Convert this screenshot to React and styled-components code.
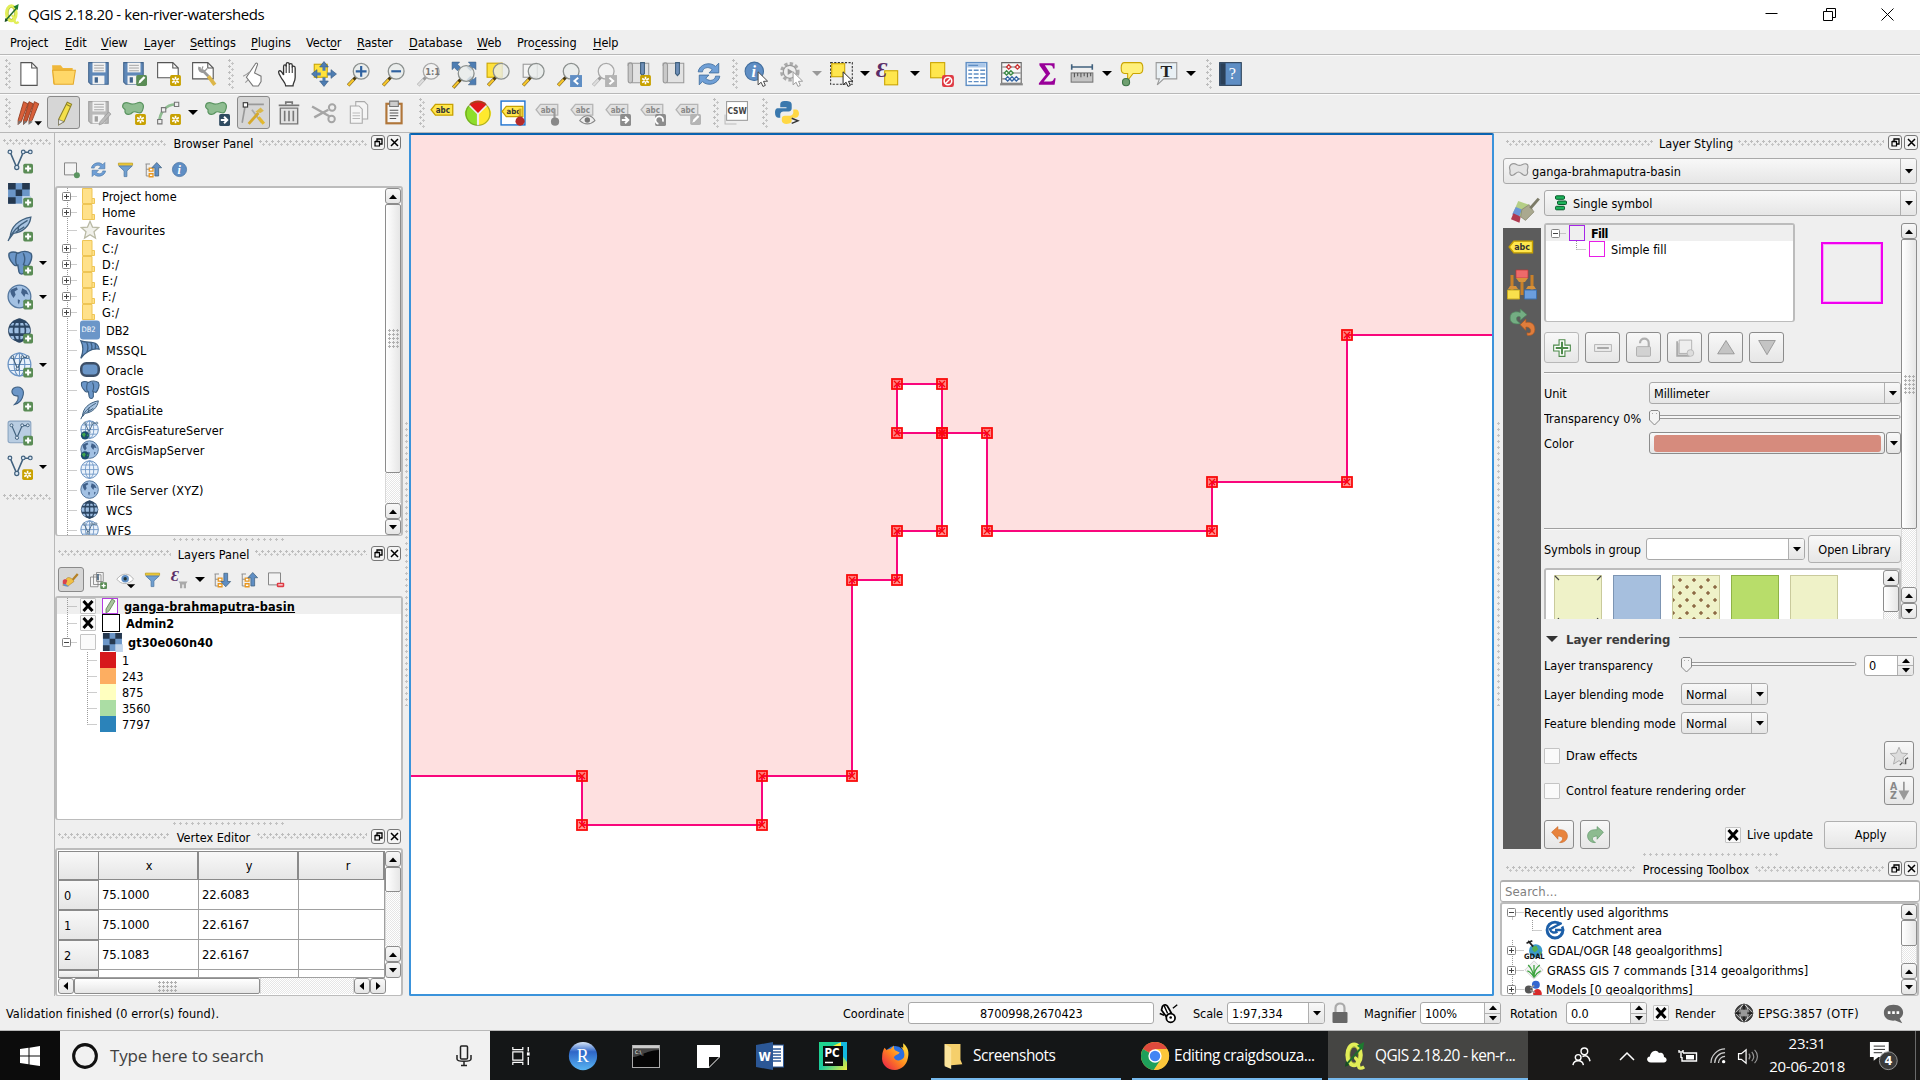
import React from 'react';
import styled, { createGlobalStyle, css } from 'styled-components';

const Global = createGlobalStyle`
  * { box-sizing: border-box; }
  html, body { margin: 0; padding: 0; overflow: hidden; }
  body {
    font-family: "DejaVu Sans Condensed", "Noto Sans", sans-serif;
    font-size: 12.6px; letter-spacing: 0; color: #000; background: #efefef;
  }
  svg { display: block; flex: none; overflow: visible; }
`;

/* ---------- shell ---------- */
const Window = styled.div`width: 1920px; height: 1080px; display: flex; flex-direction: column; background: #efefef; overflow: hidden; white-space: nowrap;`;
const TitleBar = styled.div`
  height: 30px; flex: none; background: #fff; display: flex; align-items: center; padding: 0 26px 2px 4px;
  font: 15px "Open Sans", sans-serif; letter-spacing: -0.4px;
`;
const TitleText = styled.span`flex: 1; margin-left: 8px;`;
const WinControls = styled.div`display: flex; gap: 45px; align-items: center;`;
const MenuBar = styled.div`height: 25px; flex: none; display: flex; align-items: center; padding-left: 10px; gap: 15px; border-bottom: 1px solid #b8b8b8; letter-spacing: -0.1px;`;
const MenuItem = styled.span`width: ${p => p.$w}px; u { text-underline-offset: 2px; }`;
const ToolBar = styled.div`
  height: ${p => p.$h || 39}px; flex: none; display: flex; align-items: center; padding: 0 0 2px 2px;
  border-top: 1px solid #fbfbfb; border-bottom: 1px solid #b8b8b8;
`;
const Slot = styled.div`width: ${p => p.$w || 35}px; height: 33px; flex: none; display: flex; align-items: center; justify-content: center;`;
const Pressed = styled.div`
  width: ${p => p.$w || 33}px; height: ${p => p.$h || 33}px; border: 1px solid #8a8a8a; border-radius: 3px; background: #d6d6d6;
  display: flex; align-items: center; justify-content: center;
`;
const dots = css`
  background-image: radial-gradient(circle at 1.5px 1.5px, #bdbdbd 1px, transparent 1.4px), radial-gradient(circle at 4.5px 4.5px, #c6c6c6 1px, transparent 1.4px);
  background-size: 6px 6px;
`;
const BarGrip = styled.div`width: 6px; height: 30px; flex: none; margin-left: ${p => p.$l || 0}px; margin-right: ${p => p.$r || 0}px; ${dots}`;
const Caret = styled.i`
  display: block; flex: none; width: 0; height: 0; border: ${p => p.$s || 5}px solid transparent; border-bottom-width: 0; border-top: ${p => p.$s || 5}px solid ${p => p.$c || '#000'};
`;
const CaretSlot = styled.div`width: ${p => p.$w}px; flex: none; display: flex; justify-content: center;`;

const Main = styled.div`height: 863px; flex: none; display: flex;`;
const SideBar = styled.div`width: 55px; border-right: 1px solid #b8b8b8; display: flex; flex-direction: column; align-items: flex-start; padding-top: 6px;`;
const SideGrip = styled.div`width: 48px; height: 6px; margin-left: 3px; ${dots}`;
const SideList = styled.div`margin-top: -1px;`;
const SideItem = styled.div`height: 34px; padding-left: 7px; display: flex; align-items: center; gap: 6px;`;
const LeftDock = styled.div`width: 348px; display: flex; flex-direction: column;`;
const VSplit = styled.div`width: ${p => p.$w}px; display: flex; justify-content: center; align-items: center;`;
const VDots = styled.div`width: 3px; height: 284px; margin-top: -2px; background: radial-gradient(circle at 1.5px 1.5px, #c2c2c2 1px, transparent 1.4px); background-size: 3px 6px;`;
const HSplit = styled.div`height: ${p => p.$h}px; flex: none; display: flex; justify-content: center; align-items: center;`;
const HDots = styled.div`width: ${p => p.$w}px; height: 3px; margin-top: -1px; background: radial-gradient(circle at 1.5px 1.5px, #c2c2c2 1px, transparent 1.4px); background-size: 6px 3px;`;

/* ---------- dock pieces ---------- */
const DockHead = styled.div`height: ${p => p.$h || 22}px; flex: none; display: flex; align-items: center; padding: 0 2px 0 3px;`;
const DockGrip = styled.div`flex: 1; height: 6px; margin-top: -3px; ${dots}`;
const DockName = styled.span`margin: -1px 7px 0 9px; flex: none; width: ${p => p.$w}px; text-align: center; display: flex; justify-content: center;`;
const DockBtn = styled.div`
  width: 14px; height: 15px; margin-left: ${p => p.$l}px; margin-top: -3px; border: 1px solid #777; border-radius: 3px; background: #f4f4f4;
  display: flex; align-items: center; justify-content: center;
`;
const PanelTools = styled.div`height: 31px; flex: none; display: flex; align-items: center; padding: 0 0 2px ${p => p.$l || 3}px;`;
const Frame = styled.div`
  height: ${p => p.$h}px; width: ${p => p.$w ? p.$w + 'px' : 'auto'}; flex: none; background: #fff; border: 2px solid #bcbcbc; border-bottom-width: 1px; border-radius: 3px; display: flex; overflow: hidden;
`;
const Tree = styled.div`flex: 1; min-width: 0; overflow: hidden; padding-top: ${p => p.$t || 0}px;`;
const Row = styled.div`
  height: ${p => p.$h}px; display: flex; align-items: center; background: ${p => p.$sel ? '#efefef' : 'transparent'};
  padding-left: ${p => p.$l || 0}px;
`;
const RowIcon = styled.div`margin: 0 ${p => p.$r}px 0 ${p => p.$l}px; flex: none;`;
const RowText = styled.span`
  font-weight: ${p => p.$b ? 700 : 400}; text-decoration: ${p => p.$u ? 'underline' : 'none'};
  letter-spacing: ${p => p.$ls !== undefined ? p.$ls + 'px' : '0.02px'}; line-height: 16px; margin-top: 1.6px;
`;
const Swatch = styled.div`width: 16px; height: 16px; flex: none; background: ${p => p.$c}; ${p => p.$bd && css`border: 1px solid ${p.$bd};`}`;
const CheckBox = styled.div`
  width: 16px; height: 16px; flex: none; background: #fafafa; border: 1px solid #c4c4c4; border-radius: 1px;
  display: flex; align-items: center; justify-content: center;
`;

/* ---------- controls ---------- */
const raised = css`background: linear-gradient(#f8f8f8, #e6e6e6);`;
const Scroll = styled.div`width: 16px; flex: none; display: flex; flex-direction: column; height: ${p => p.$h ? p.$h + 'px' : 'auto'};`;
const HScroll = styled.div`height: 16px; width: 328px; flex: none; display: flex;`;
const ScrollBtn = styled.div`
  width: 16px; height: 16px; flex: none; border: 1px solid #8c8c8c; border-radius: 3px; ${raised}
  display: flex; align-items: center; justify-content: center;
`;
const Thumb = styled.div`
  ${p => p.$x ? css`width: ${p.$x}px; height: 16px;` : css`height: ${p.$y}px; width: 16px;`}
  flex: none; border: 1px solid #8c8c8c; border-radius: 2px; background: linear-gradient(${p => p.$x ? '180deg' : '90deg'}, #fff, #e6e6e6);
  display: flex; align-items: center; justify-content: center;
`;
const ThumbDots = styled.div`width: ${p => p.$w}px; height: ${p => p.$h}px; background: radial-gradient(circle at 1.5px 1.5px, #b0b0b0 1px, transparent 1.4px); background-size: 4px 4px;`;
const Track = styled.div`flex: 1; background: conic-gradient(#fff 25%, #e6e6e6 0 50%, #fff 0 75%, #e6e6e6 0); background-size: 2px 2px; border: 0 solid #d8d8d8; border-width: 0 1px;`;
const Combo = styled.div`
  width: ${p => p.$w}px; height: ${p => p.$h}px; margin-left: ${p => p.$l || 0}px; flex: none; border: 1px solid #a9a9a9; border-radius: 3px;
  ${p => p.$edit ? 'background: #fff;' : raised} display: flex; align-items: center; padding-left: ${p => p.$p || 4}px; overflow: hidden;
`;
const ComboText = styled.span`flex: 1; padding-left: ${p => p.$l || 0}px; letter-spacing: ${p => p.$ls !== undefined ? p.$ls + 'px' : '-0.1px'};`;
const ComboDrop = styled.div`width: 16px; align-self: stretch; border-left: 1px solid #b0b0b0; ${raised} display: flex; align-items: center; justify-content: center;`;
const SpinCol = styled.div`width: 16px; align-self: stretch; border-left: 1px solid #b0b0b0; ${raised} display: flex; flex-direction: column; > :first-child { border-bottom: 1px solid #b0b0b0; }`;
const SpinHalf = styled.div`flex: 1; display: flex; align-items: center; justify-content: center;`;
const Btn = styled.div`
  width: ${p => p.$w}px; height: ${p => p.$h}px; flex: none; border: 1px solid ${p => p.$c || '#8c8c8c'}; border-radius: 3px; ${raised}
  display: flex; align-items: center; justify-content: center; letter-spacing: -0.1px;
`;

/* ---------- vertex table ---------- */
const TableWrap = styled.div`flex: 1; display: flex; flex-direction: column; padding: 1px 0 0 1px;`;
const TableTop = styled.div`height: 127px; display: flex; flex: none;`;
const Grid = styled.div`flex: 1; display: grid; grid-template-columns: 41px 100px 100px 86px; grid-template-rows: 29px 30px 30px 30px 8px; overflow: hidden;`;
const HeadCell = styled.div`
  ${raised} border: 1px solid #8a8a8a; border-width: 1px 2px 1px 0; display: flex; align-items: center;
  justify-content: ${p => p.$row ? 'flex-start' : 'center'}; padding-left: ${p => p.$row ? 5 : p.$l || 2}px;
  ${p => p.$row && css`border-width: 1px 1px 1px 1px;`}
`;
const Cell = styled.div`border: 1px solid #a0a0a0; border-width: 0 1px 1px 0; display: flex; align-items: center; padding: 0 0 1px 3px; font-size: 13px; letter-spacing: -0.15px;`;

/* ---------- canvas ---------- */
const Canvas = styled.div`width: 1085px; height: 863px; flex: none; border: 2px solid #3b93db; border-top-color: #0a63b0; border-radius: 2px; background: #fff; overflow: hidden;`;

/* ---------- right dock ---------- */
const RightDock = styled.div`width: 417px; display: flex; flex-direction: column;`;
const StyleBody = styled.div`display: flex; margin-top: 6px; height: 659px; flex: none;`;
const StyleTabs = styled.div`width: 38px; flex: none; display: flex; flex-direction: column;`;
const TabActive = styled.div`height: 38px; display: flex; align-items: center; justify-content: flex-end; padding-right: 1px;`;
const TabStack = styled.div`flex: 1; background: #5c5c5c; display: flex; flex-direction: column; align-items: center; padding-top: 5px; gap: 5px;`;
const StyleMain = styled.div`flex: 1; padding: 0 3px 0 3px; display: flex; flex-direction: column;`;
const ScrollArea = styled.div`height: 396px; margin-top: 7px; display: flex; flex: none;`;
const ScrollContent = styled.div`width: 357px; display: flex; flex-direction: column; overflow: hidden;`;
const SymbolTop = styled.div`display: flex; height: 99px; flex: none;`;
const Preview = styled.div`width: 62px; height: 62px; margin: 19px 0 0 26px; border: 2px solid #f000f0; box-shadow: inset 0 0 0 1px #f9a8f7;`;
const BtnRow = styled.div`display: flex; gap: 6px; margin-top: 10px; height: 31px; flex: none;`;
const Rule = styled.div`height: 2px; flex: none; border-top: 1px solid #a0a0a0; border-bottom: 1px solid #fafafa; margin-top: ${p => p.$t || 0}px;`;
const Field = styled.div`display: flex; align-items: center; height: ${p => p.$h}px; margin-top: ${p => p.$t || 0}px; flex: none;`;
const FieldLabel = styled.span`width: ${p => p.$w}px; flex: none; letter-spacing: ${p => p.$ls !== undefined ? p.$ls + 'px' : 'inherit'};`;
const ColorFill = styled.div`width: 227px; height: 17px; background: #d68b7d; border-radius: 3px;`;
const SymbolList = styled.div`height: 60px; flex: none; margin-top: 5px; background: #fff; border: 2px solid #bcbcbc; border-bottom: 0; border-radius: 3px 3px 0 0; display: flex; padding-left: 8px;`;
const SymbolItems = styled.div`flex: 1; display: flex; gap: 11px; padding-top: 5px;`;
const SymbolTile = styled.div`
  width: 48px; height: 60px; background: ${p => p.$c}; border: 1px solid ${p => p.$b};
  ${p => p.$dots && css`background-image: radial-gradient(circle at 7px 4px, #8d6a45 1.4px, transparent 2px), radial-gradient(circle at 0px 11px, #8d6a45 1.4px, transparent 2px), radial-gradient(circle at 14px 11px, #8d6a45 1.4px, transparent 2px); background-size: 14px 13px;`}
`;
const GroupHead = styled.div`display: flex; align-items: center; height: 20px; margin-top: 10px; padding-left: 2px; font-weight: 700; color: #3c3c3c; flex: none;`;
const GroupName = styled.span`margin: 0 7px 0 8px; width: 106px; font-size: 13px; letter-spacing: -0.06px;`;
const GroupLine = styled.div`flex: 1; height: 1px; background: #8c8c8c; margin-top: -3px;`;
const Spacer = styled.div`flex: 1;`;
const SearchField = styled.div`height: 22px; margin-left: -3px; flex: none; background: #fff; border: 1px solid #b0b0b0; border-top-width: 2px; border-radius: 3px; color: #808080; padding-left: 4px; display: flex; align-items: center; letter-spacing: 0.12px; font-size: 13px;`;

/* ---------- status bar ---------- */
const StatusBar = styled.div`height: 35px; flex: none; border-bottom: 1px solid #b8b8b8; display: flex; align-items: center; padding: 0 0 0 6px;`;
const StatusText = styled.span`width: ${p => p.$w}px; flex: none; margin-left: ${p => p.$l || 0}px; letter-spacing: ${p => p.$ls !== undefined ? p.$ls + 'px' : '-0.1px'};`;
const Box = styled.div`margin-left: ${p => p.$l}px; flex: none;`;

/* ---------- taskbar ---------- */
const TaskBar = styled.div`height: 50px; flex: none; background: #141617; display: flex; color: #fff; font: 15.4px "Open Sans", sans-serif; letter-spacing: -0.3px;`;
const Start = styled.div`width: 60px; flex: none; background: #0c0c0c; display: flex; align-items: center; justify-content: center;`;
const Search = styled.div`width: 430px; flex: none; background: #f1f1f1; color: #404040; display: flex; align-items: center; padding: 0 17px 0 12px; font-size: 17px; letter-spacing: -0.14px;`;
const SearchText = styled.span`flex: 1; margin: -2px 0 0 12px;`;
const AppIcon = styled.div`width: 62.3px; flex: none; display: flex; align-items: center; justify-content: center;`;
const TaskApp = styled.div`
  width: ${p => p.$w}px; flex: none; margin-left: ${p => p.$l || 0}px; display: flex; align-items: center; padding-left: ${p => p.$p}px;
  background: ${p => p.$on ? '#454543' : 'transparent'}; border-bottom: 3px solid #76b9ed; padding-top: 3px;
`;
const AppText = styled.span`margin: -1px 0 0 ${p => p.$l}px; letter-spacing: ${p => p.$ls}px;`;
const Tray = styled.div`flex: 1; display: flex; align-items: center; background: #1a1918;`;
const TrayIcon = styled.div`width: ${p => p.$w}px; display: flex; justify-content: center; flex: none;`;
const Clock = styled.div`width: 90px; flex: none; text-align: center; line-height: 23px; margin-top: -2px; font-size: 15px; letter-spacing: -0.25px;`;
const Peek = styled.div`width: 5px; height: 50px; flex: none; border-left: 1px solid #6a6a6a;`;

/* ---------- icon primitives ---------- */
const Ic = ({ s = 26, w, h, vb = '0 0 24 24', children }) => (
  <svg width={w || s} height={h || s} viewBox={vb} fill="none">{children}</svg>
);
const Glyph = styled.text`font-family: ${p => p.$f || '"DejaVu Sans Condensed", sans-serif'}; font-weight: ${p => p.$wt || 400}; letter-spacing: 0;`;
const Star = ({ x = 13, y = 13, c = '#c8a100' }) => (
  <g transform={`translate(${x} ${y})`}><rect width="10" height="10" rx="1.5" fill={c} /><path d="M5 1.5v7M1.9 3.2l6.2 3.6M1.9 6.8l6.2-3.6" stroke="#fff" strokeWidth="1.5" /><circle cx="5" cy="5" r="1" fill={c} /></g>
);
const Plus = ({ x = 13.5, y = 13.5 }) => (
  <g transform={`translate(${x} ${y})`}><rect width="9" height="9" rx="1.5" fill="#5a8c55" /><path d="M4.5 1.7v5.6M1.7 4.5h5.6" stroke="#fff" strokeWidth="1.9" /></g>
);
const ArrowBadge = ({ c = '#2e4a5f' }) => <g><rect x="14" y="13" width="10" height="11" rx="1.5" fill={c} /><path d="M15.5 18.5h5M18.5 15.5l3 3-3 3" stroke="#fff" strokeWidth="1.8" /></g>;
const PenBadge = ({ c = '#5a8c55' }) => <g><rect x="14" y="13" width="10" height="10" rx="1.5" fill={c} /><path d="M16 21l1-3 4-4 1.5 1.5-4 4z" fill="#fff" /></g>;
const Lens = ({ gray, x = 0 }) => (
  <g transform={`translate(${x} 0)`}>
    <path d="M2 22.5l7-7.5" stroke={gray ? '#9a9a9a' : '#4a3a10'} strokeWidth="3" /><path d="M2 22.5l5-5.3" stroke={gray ? '#ddd' : '#f5c52e'} strokeWidth="2.2" />
    <circle cx="14" cy="9.500" r="7.300" fill={gray ? '#f3f3f3' : '#e9eceb'} fillOpacity=".8" stroke={gray ? '#a8a8a8' : '#8b908e'} strokeWidth="1.2" />
  </g>
);
const Cursor = ({ c = '#444' }) => <path d="M13 10v12l2.8-2.4 1.7 3.9 2.2-1-1.7-3.7 3.8-.2z" fill="#fff" stroke={c} strokeWidth=".9" />;
const Disk = ({ c = '#5f88b8', e = '#41648c' }) => <g><path d="M2.5 1.5h18v20h-16l-2-2z" fill={c} stroke={e} /><rect x="6" y="1.5" width="12" height="9" fill="#f2f2f2" /><path d="M7.5 4h9M7.5 6.500h9M7.5 9h9" stroke="#999" strokeWidth=".8" /><rect x="6" y="13.5" width="11" height="8" fill="#f2f2f2" /><rect x="8" y="15" width="3" height="5" fill={e} /></g>;
const Tag = ({ c = '#ffe64d', e = '#c8a100', t = '#333', s = 7.4, dy = 0 }) => <g transform={`translate(0 ${dy})`}><path d="M1 9l4-5h16v10H5z" fill={c} stroke={e} strokeWidth="1.2" /><Glyph x="5.3" y="11.6" fontSize={s} fill={t} $wt={700}>abc</Glyph></g>;
const Blob = () => <path d="M1.5 6c0-4 4-4 6-3 3 1.500 5 1 8-.5 3-1 6 1 5 5s-2 5-5 4-4-1-5 0-4 3-6 1 0-3-1-4-2-1-2-2.500z" fill="#8fbd91" stroke="#5a9460" strokeWidth="1.1" />;
const VNet = ({ k = '#41617e', sc = 1, x = 0, y = 0 }) => <g transform={`translate(${x} ${y}) scale(${sc})`} stroke={k}><path d="M3 4l6 14L15 4h5" strokeWidth="1.4" /><g fill="#dbe7f3" strokeWidth="1.1"><circle cx="2.700" cy="3.600" r="1.700" /><circle cx="9" cy="18" r="1.900" /><circle cx="15" cy="3.600" r="1.700" /><circle cx="21.500" cy="3.600" r="1.700" /></g></g>;
const Globe = ({ f = '#eaf2fb', k = '#6b94c4' }) => <g stroke={k}><circle cx="11.500" cy="11.500" r="10.500" fill={f} strokeWidth="1.200" /><ellipse cx="11.500" cy="11.500" rx="5" ry="10.500" /><path d="M11.500 1v21M1 11.500h21M3 6h17M3 17h17" /></g>;
const MapGlobe = () => <g><circle cx="11.500" cy="11.500" r="10.500" fill="#a3c1e3" stroke="#54779e" strokeWidth="1.200" /><path d="M4 5l5-2 1 2-3 2 1 3-2 3-2-3-1-3zM14 4l4 2 2 4-3-1-1 3-3-4zM10 14l2 1-1 4-1-2zM17 14l2 1-2 3z" fill="#41618a" /></g>;
const DarkGlobe = () => <g><circle cx="11.500" cy="11.500" r="10.500" fill="#2c4663" /><path d="M5 4.500h13l2 2.500H3zM1.500 11.500l1-2.500h18l1 2.500-1 2.500H2.500zM3 16.500h17l-2 3H5z" fill="#9dbde0" /><path d="M11.500 1v21" stroke="#2c4663" strokeWidth="1.600" /><ellipse cx="11.500" cy="11.500" rx="5.500" ry="10.500" stroke="#2c4663" strokeWidth="1.500" /></g>;
const Raster = () => <g><rect x="1" y="1" width="20" height="19" fill="#6b96c8" /><path d="M1 1h7v6H1zM14 1h7v6h-7zM8 7h6v6H8zM1 14h7v6H1z" fill="#25384f" /><path d="M14 13h8v8h-8z" fill="#c3d6ec" /></g>;
const Feather = () => <g><path d="M3 20C3 10 11 3 22 1c-1 8-7 14-16 15z" fill="#a9c5e3" stroke="#41617e" strokeWidth="1.200" /><path d="M1 23c3-8 9-14 18-19M8 15l8-5M11 9l-1 5" stroke="#41617e" strokeWidth="1.200" /></g>;
const Elephant = () => <g><path d="M2 3c3-2 6-1 8 0 4-2 9-2 12 0 2 3 0 9-3 12l-3-1v6c-1 3-4 3-5 0l-1-6c-2 1-4 0-5-2C3 10 1 6 2 3z" fill="#6b96c8" stroke="#3d5e80" strokeWidth="1.300" /><path d="M9 3c-1 4-2 7 0 11M15 3c2 4 2 7 0 11" stroke="#3d5e80" strokeWidth="1.300" /></g>;
const Refresh = () => <g><path d="M2 10C3 3 13 0 18 5l3-3v9h-9l3-3c-4-4-9-1-9 2z" fill="#6f9fd6" stroke="#426f9f" strokeWidth=".8" /><path d="M22 14c-1 7-11 10-16 5l-3 3v-9h9l-3 3c4 4 9 1 9-2z" fill="#6f9fd6" stroke="#426f9f" strokeWidth=".8" /></g>;
const Book = () => <g><path d="M2 2h19v18H6c-1.500 0-2-1-2-2V4H2z" fill="#e2e2e2" stroke="#999" /><path d="M2 4c0-3 4-3 4 0v14c0 3-4 3-4 0z" fill="#c9c9c9" stroke="#999" /><path d="M13.500 1.500h3.500v10l-1.800 2-1.800-2z" fill="#6f8fb8" stroke="#41617e" /></g>;
const Brush = () => <g><path d="M2 14l4-9 9 3-4 12z" fill="#b5cf86" /><path d="M1 16l3-6 5 2-3 8z" fill="#6b96d8" /><path d="M0 20l2-5 6 3-1 5z" fill="#b03a50" /><path d="M9 12l6-4 4 6-7 7-4-3z" fill="#aaa98f" stroke="#85846e" strokeWidth=".6" /><path d="M16 11l7-8" stroke="#7c7b68" strokeWidth="2.400" /></g>;
const Sweep = () => <g><path d="M14 12l7-8" stroke="#b58126" strokeWidth="3" /><path d="M6 10c3-3 8 0 10 4l-8 6-7-1z" fill="#f0c046" stroke="#a87722" strokeWidth=".7" /><path d="M1 13c2-3 5-2 6 0l-2 5-4-1z" fill="#d9434e" /><path d="M1 17l5 1 3 3-6-1z" fill="#5f8ed0" /></g>;
const TreeArrow = ({ up }) => <g><path d="M2 4h6M3 4v16h4M3 11h4" stroke="#8d8d8d" strokeWidth="1.300" /><path d="M7 9.500h5v4H7zM7 17h5v4H7z" fill="#fff" stroke="#e8961e" strokeWidth="1.700" />{up ? <path d="M14.500 20V9h-4l6.500-7 6.500 7h-4v11z" fill="#5f8ec4" stroke="#41617e" /> : <path d="M14.500 3v11h-4l6.500 7 6.500-7h-4V3z" fill="#5f8ec4" stroke="#41617e" />}</g>;
const Funnel = () => <g><path d="M2 3h20v3H2z" fill="#f4d33d" stroke="#b89616" /><path d="M2.500 7h19L14 14v8h-4v-8z" fill="#6f9fd0" stroke="#4a739e" /></g>;
const Box24 = () => <path d="M2 2.500h16v16H2z" fill="#f3f3f3" stroke="#7c7c7c" strokeWidth="1.200" />;
const Eps = ({ c = '#5a2d68', x = 1, s = 18, y = 14 }) => <Glyph x={x} y={y} fontSize={s} fill={c} $f='"Liberation Serif", "DejaVu Serif", serif' $wt={700} fontStyle="italic">Ɛ</Glyph>;
const Folder = () => <Ic w={13} h={16} vb="0 0 13 16"><path d="M.5.5h9.500v10h2.500v5H.5z" fill="#ffe18a" stroke="#eec555" /><path d="M10 10.500v5" stroke="#eec555" /></Ic>;

const I = {
  qgis: s => <Ic w={s || 16} h={s ? s * 1.35 : 22} vb="0 0 24 30"><ellipse cx="11" cy="14" rx="7" ry="11" stroke="#e2ee58" strokeWidth="5" /><ellipse cx="11" cy="14" rx="4.600" ry="9" stroke="#87921f" strokeWidth=".7" /><path d="M11 17c3 0 5 6 5 9s3 3 6 1" stroke="#e2ee58" strokeWidth="3.600" /><path d="M3 24L20 5" stroke="#206b2c" strokeWidth="2.200" /><path d="M22 0l-1.500 9-6.500-5z" fill="#1d7a2f" /><path d="M1 27l1-6 4 4z" fill="#174d22" /></Ic>,
  newDoc: <Ic><path d="M4.500 1.500h10l5 5v16h-15z" fill="#fff" stroke="#555" /><path d="M14.500 1.500v5h5" stroke="#555" /></Ic>,
  open: <Ic><path d="M1 4h8l2 2.500h9V21H2z" fill="#efb73a" /><path d="M1.500 8.500h21l-2 13H3z" fill="#ffd768" stroke="#e3a92b" /></Ic>,
  save: <Ic><Disk /></Ic>,
  saveAs: <Ic><Disk /><PenBadge /></Ic>,
  saveGray: <Ic><Disk c="#b9b9b9" e="#a0a0a0" /><path d="M13 20l8-9 2 2-8 9-3 1z" fill="#bbb" stroke="#999" strokeWidth=".7" /></Ic>,
  composer: <Ic><path d="M1.500 1.500h14l5 5v9h-19z" fill="#fff" stroke="#555" /><path d="M15.500 1.500v5h5" stroke="#555" /><Star /></Ic>,
  composerMgr: <Ic><path d="M1.500 1.500h14l5 5v10h-19z" fill="#fff" stroke="#555" /><path d="M15.500 1.500v5h5" stroke="#555" /><path d="M8 5.500c-1 3 1 4.500 4 4.500l4 4" stroke="#999" strokeWidth="2.600" /><path d="M11 5l-1 3 3 1 2-2" stroke="#999" strokeWidth="1.200" /><path d="M16 14l6 8" stroke="#dcb649" strokeWidth="3.500" /></Ic>,
  touch: <Ic><path d="M5 15l8-12c1-2 3-1 2 1l-2.500 7 6 3v5l-2.500 4h-5z" fill="#fff" stroke="#777" /><path d="M8 10c-2 2-4 3-6 4M4 20l3-3" stroke="#999" /></Ic>,
  hand: <Ic><path d="M4 14c-2-3-2-5-.5-5S6 11 7 13V5c0-2 2.400-2 2.400 0V3c0-2 2.800-2 2.800 0v1c0-2 2.800-2 2.800 0v2c0-1.700 2.700-1.700 2.700.5V15c0 4-2 5-2 8H9c0-3-3-5-5-9z" fill="#fff" stroke="#333" strokeWidth="1.200" /><path d="M9.400 4v7M12.200 4v7M15 5v6" stroke="#333" /></Ic>,
  pan: <Ic><rect x="3" y="3" width="12" height="12" fill="#ffe23d" stroke="#caa400" /><path d="M12 .5l4 5H8zM12 23.500l4-5H8zM.5 12l5-4v8zM23.500 12l-5-4v8z" fill="#4d7db3" stroke="#36587f" strokeWidth=".6" /><path d="M12 5v4M12 15v4M5 12h4M15 12h4" stroke="#4d7db3" strokeWidth="2.800" /></Ic>,
  zin: <Ic><Lens /><path d="M14 4.500v10M9 9.500h10" stroke="#2f62a0" strokeWidth="2" /></Ic>,
  zout: <Ic><Lens /><path d="M9.500 9.500h9" stroke="#2f62a0" strokeWidth="2" /></Ic>,
  z11: <Ic><Lens gray /><Glyph x="8.500" y="12.500" fontSize="8.500" fill="#777" $wt={700}>1:1</Glyph></Ic>,
  zfull: <Ic><g fill="#4d7db3" stroke="#36587f" strokeWidth=".5"><path d="M1 1h7L6 3l3 3-3 3-3-3-2 2zM23 1h-7l2 2-3 3 3 3 3-3 2 2zM23 22h-7l2-2-3-3 3-3 3 3 2-2z" /></g><g transform="translate(0 2) "><Lens /></g></Ic>,
  zsel: <Ic><rect x="1" y="2" width="14" height="13" fill="#ffe23d" stroke="#caa400" /><Lens /></Ic>,
  zlay: <Ic><rect x="2" y="3" width="13" height="12" fill="#f4f4f4" stroke="#999" /><Lens /></Ic>,
  zlast: <Ic><Lens /><rect x="13" y="13" width="11" height="11" fill="#5f8ec4" /><path d="M20.500 15.500l-3.500 3 3.500 3" stroke="#fff" strokeWidth="1.800" /></Ic>,
  znext: <Ic><Lens gray /><rect x="13" y="13" width="11" height="11" fill="#b4b4b4" /><path d="M17 15.500l3.500 3-3.500 3" stroke="#fff" strokeWidth="1.800" /></Ic>,
  bookNew: <Ic><Book /><Star /></Ic>, book: <Ic><Book /></Ic>, refresh: <Ic><Refresh /></Ic>,
  identify: <Ic><circle cx="9.500" cy="9.500" r="8.500" fill="#5f8ec4" stroke="#426f9f" /><Glyph x="7" y="15" fontSize="15" fill="#fff" $f='"Liberation Serif", serif' $wt={700} fontStyle="italic">i</Glyph><Cursor /></Ic>,
  action: <Ic><circle cx="10" cy="10" r="7.500" fill="#e5e5e5" stroke="#aaa" strokeWidth="3" strokeDasharray="3 2" /><circle cx="10" cy="10" r="6" fill="#eee" stroke="#999" /><path d="M8 7v6l5-3z" fill="#999" /><Cursor c="#999" /></Ic>,
  select: <Ic><rect x="1.500" y="1.500" width="20" height="20" stroke="#333" strokeDasharray="2 1.300" /><rect x="2.500" y="2.500" width="12" height="12" fill="#ffe64d" stroke="#caa400" /><Cursor c="#222" /></Ic>,
  expr: <Ic><rect x="8" y="9" width="12" height="13" fill="#ffe64d" stroke="#caa400" /><Eps s={20} x={0} y={15} /></Ic>,
  deselect: <Ic><rect x="1.500" y="1.500" width="13" height="14" fill="#ffe64d" stroke="#caa400" /><rect x="12" y="13" width="11" height="11" rx="2" fill="#df3b44" /><circle cx="17.500" cy="18.500" r="3.500" stroke="#fff" strokeWidth="1.400" /><path d="M15 21l5-5" stroke="#fff" strokeWidth="1.400" /></Ic>,
  table: <Ic><rect x="2" y="1.500" width="19" height="21" fill="#fff" stroke="#5f8ec4" strokeWidth="1.300" /><path d="M3 2h17v4H3z" fill="#a9c6e8" /><path d="M4 8.500h3.500M9 8.500h4.500M15 8.500h4.500M4 12h3.500M9 12h4.500M15 12h4.500M4 15.500h3.500M9 15.500h4.500M15 15.500h4.500M4 19h3.500M9 19h4.500M15 19h4.500M4 4h9" stroke="#5f8ec4" strokeWidth="1.300" /></Ic>,
  abacus: <Ic><path d="M2.500 1.500h18v19h-18z" fill="#f7f7f7" stroke="#666" /><path d="M3 5.500h17M3 11h17M3 16.500h17" stroke="#777" /><g strokeWidth="1.300" fill="#fff"><path d="M7 5.500l2-2 2 2-2 2zM15 5.500l2-2 2 2-2 2z" stroke="#c33" /><path d="M5 11l2-2 2 2-2 2zM9 11l2-2 2 2-2 2z" stroke="#3c8a46" /><path d="M6 16.500l2-2 2 2-2 2zM10 16.500l2-2 2 2-2 2zM14 16.500l2-2 2 2-2 2z" stroke="#3566a5" /></g><path d="M1 20.500h21v2H1z" fill="#888" /></Ic>,
  sigma: <Ic><path d="M5 2h14v5h-1.500c0-2-1-3-3-3H10l5 7.500L9 19h6c2 0 3-1 3.500-3H20l-1 6H4.500v-1.500L11 12.500 5 4z" fill="#990099" /></Ic>,
  measure: <Ic><path d="M2 5.500h20M2.500 3v5M21.500 3v5" stroke="#41617e" strokeWidth="1.500" /><rect x="2" y="11" width="20" height="8.500" fill="#c4c4c4" stroke="#777" /><path d="M5 11v4M8 11v3M11 11v4M14 11v3M17 11v4M20 11v3" stroke="#555" /></Ic>,
  tip: <Ic><path d="M5 1.500h14c4 0 4 10 0 10h-6L8 18v-6.500H5c-4 0-4-10 0-10z" fill="#fff07a" stroke="#caa400" /><circle cx="6.500" cy="19.500" r="3.300" fill="#6fa070" stroke="#3d7347" /></Ic>,
  textA: <Ic><path d="M2 1.500h19v15H9L3 22l2-5.500H2z" fill="#e9f0f4" stroke="#999" /><Glyph x="6" y="14.500" fontSize="16" fill="#222" $f='"Liberation Serif", serif' $wt={700}>T</Glyph></Ic>,
  help: <Ic><rect x="1.500" y="1.500" width="20" height="21" fill="#5f8ec4" stroke="#2b4058" /><path d="M2 2h5v20H2z" fill="#2b4058" /><Glyph x="10" y="17" fontSize="15" fill="#fff" $f='"Liberation Serif", serif'>?</Glyph></Ic>,
  pencils: <Ic w={26} h={27}><path d="M2 19L7 2l4 2-6 16-3 3z" fill="#d9603a" stroke="#8e3a1e" strokeWidth=".8" /><path d="M7 19l5-17 4 2-6 16-3 3z" fill="#c9532f" stroke="#8e3a1e" strokeWidth=".8" /><path d="M12 19l5-17 4 2-6 15-3 3z" fill="#d9603a" stroke="#8e3a1e" strokeWidth=".8" /><path d="M1.500 23.500l1-4 3 1zM6.500 23.500l1-4 3 1zM11.500 23.500l1-4 3 1z" fill="#777" /><path d="M17 20h7l-3.500 4z" fill="#000" /></Ic>,
  pencil: <Ic><path d="M7 18L15 2l4 2-7 16-5 3z" fill="#f4e04a" stroke="#8d8228" /><path d="M7 23v-5l5 2z" fill="#eee" stroke="#666" strokeWidth=".6" /><path d="M14 4l4 2" stroke="#8d8228" /></Ic>,
  addFeat: <Ic><Blob /><Star /></Ic>,
  curve: <Ic><path d="M3 21C3 12 9 4 18 4" stroke="#8fbd91" strokeWidth="2.500" /><path d="M1.500 18h4v4h-4zM5 7h4v4H5zM17 2h4v4h-4z" fill="#eee" stroke="#777" /><Star /></Ic>,
  moveFeat: <Ic><Blob /><ArrowBadge /></Ic>,
  node: <Ic><path d="M2 21L5 4h17" stroke="#999" strokeWidth="1.500" /><rect x="3" y="2.500" width="4" height="4" fill="#fff" stroke="#333" /><path d="M11 9l9 12" stroke="#aaa" strokeWidth="1.600" /><path d="M8 22l9-10" stroke="#d5a92c" strokeWidth="2.600" /><path d="M14 11l5-4 3 3-3 2z" fill="#d9b84c" /><path d="M17 16l5 6" stroke="#e3b92f" strokeWidth="3" /></Ic>,
  trash: <Ic><path d="M4 7.500h16v14.500H4z" fill="#e3e3e3" stroke="#777" strokeWidth="1.300" /><path d="M2.500 5h19M9 4V2h6v2M8 10v9.500M12 10v9.500M16 10v9.500" stroke="#777" strokeWidth="1.500" /></Ic>,
  cut: <Ic><path d="M1 6l16 9M3 16l13-7" stroke="#a5a5a5" strokeWidth="2.200" /><circle cx="19.500" cy="7" r="3" stroke="#a5a5a5" strokeWidth="1.800" /><circle cx="19" cy="17.500" r="3" stroke="#a5a5a5" strokeWidth="1.800" /></Ic>,
  copy: <Ic><g stroke="#aaa" fill="#f5f5f5"><path d="M9 1.500h8l3 3v13H9z" /><path d="M4 5.500h8l3 3v13H4z" /></g><path d="M6 12h7M6 14.500h7M6 17h7" stroke="#bbb" /></Ic>,
  paste: <Ic><rect x="4" y="2.500" width="16" height="20" fill="#b0763a" /><rect x="6" y="4.500" width="12" height="16" fill="#f5f5f5" /><path d="M8 1h8v5H8z" fill="#ccc" stroke="#777" /><path d="M8 9.500h8M8 12h8M8 14.500h8M8 17h6" stroke="#555" /></Ic>,
  abc: <Ic><Tag dy={0} /></Ic>,
  pie: <Ic s={26}><path d="M12 12L4 4a11 11 0 0 1 16 0z" fill="#e01919" /><path d="M11 13v10.500A11 11 0 0 1 3 5z" fill="#8ede2b" /><path d="M13 13v10.500A11 11 0 0 0 21 5z" fill="#ffe92e" /><circle cx="12" cy="12.500" r="11" stroke="#5f7a20" strokeOpacity=".55" /></Ic>,
  labHl: <Ic s={26}><rect x="1" y="1" width="22" height="22" fill="#fff" stroke="#1e73d0" strokeWidth="1.300" /><g transform="translate(1 1) scale(.96)"><Tag dy={1} /></g><path d="M18.500 8v10" stroke="#c9a922" strokeWidth="2.500" /><circle cx="18.500" cy="19.500" r="4.200" fill="#b52a2a" /></Ic>,
  labPin: <Ic><Tag c="#e2e2e2" e="#b5b5b5" t="#888" /><path d="M18 8v11" stroke="#999" strokeWidth="2" /><circle cx="18.500" cy="20" r="3.800" fill="#888" /></Ic>,
  labEye: <Ic><Tag c="#e2e2e2" e="#b5b5b5" t="#888" /><path d="M9 19c4-6 11-6 14 0-4 4-10 4-14 0z" fill="#eee" stroke="#888" /><circle cx="16" cy="18.500" r="2.500" fill="#777" /></Ic>,
  labMove: <Ic><Tag c="#e2e2e2" e="#b5b5b5" t="#888" /><ArrowBadge c="#8c8c8c" /></Ic>,
  labRot: <Ic><Tag c="#e2e2e2" e="#b5b5b5" t="#888" /><rect x="14" y="13" width="10" height="11" rx="1.500" fill="#8c8c8c" /><path d="M17 22a3.500 3.500 0 1 1 4-2" stroke="#fff" strokeWidth="1.600" /></Ic>,
  labEdit: <Ic><Tag c="#e2e2e2" e="#b5b5b5" t="#888" /><PenBadge c="#b4b4b4" /></Ic>,
  csw: <Ic s={25}><path d="M1 14v9h11" fill="#eee" stroke="#bbb" /><rect x="2.500" y="1.500" width="20" height="18" fill="#fff" stroke="#999" /><Glyph x="3.300" y="13.500" fontSize="8" fill="#444" $wt={700}>CSW</Glyph></Ic>,
  python: <Ic s={25}><path d="M11 1c-4 0-5 1.500-5 3.500V7h6v1H4C1.500 8 1 10 1 12.500S2 17 4 17h2v-3c0-2 1.500-3 3-3h5c2 0 3-1 3-3V4.500C17 2 15 1 11 1z" fill="#3a78ad" /><path d="M12 23c4 0 5-1.500 5-3.500V17h-1h5c2 0 3-2 3-4s-1-4-3-4h-2.500v3c0 2-1.500 3-3 3h-5c-2 0-3 1-3 3v2c0 2 2 3 4.500 3z" fill="#ffd845" /><path d="M17 17.500l6 2.500-6 2.500" stroke="#333" strokeWidth="1.400" /></Ic>,
};

const ToolIcon = ({ children, w }) => <Slot $w={w}>{children}</Slot>;

/* ---------- reusable widgets ---------- */
const Arrow = ({ d, c = '#000' }) => {
  const p = { up: 'M0 5L4 0.500 8 5z', down: 'M0 0h8L4 4.500z', left: 'M5 0v8L.5 4z', right: 'M1 0v8l4.500-4z' }[d];
  const v = d === 'up' || d === 'down';
  return <svg width={v ? 8 : 6} height={v ? 5 : 8} viewBox={v ? '0 0 8 5' : '0 0 6 8'}><path d={p} fill={c} /></svg>;
};
const VScroll = ({ thumb, grip, h }) => (
  <Scroll $h={h}>
    <ScrollBtn><Arrow d="up" /></ScrollBtn>
    <Thumb $y={thumb}>{grip && <ThumbDots $w={11} $h={19} />}</Thumb>
    <Track />
    <ScrollBtn><Arrow d="up" /></ScrollBtn>
    <ScrollBtn><Arrow d="down" /></ScrollBtn>
  </Scroll>
);
const Head = ({ children, h, w }) => (
  <DockHead $h={h}>
    <DockGrip /><DockName $w={w}>{children}</DockName><DockGrip />
    <DockBtn $l={4}><svg width="9" height="9" viewBox="0 0 9 9" fill="none"><path d="M3 3V1h5v5H6" stroke="#000" strokeWidth="1.300" /><path d="M1 3.500h4.500V8H1z" stroke="#000" strokeWidth="1.200" /><path d="M1 3.500h4.500" stroke="#000" strokeWidth="1.600" /></svg></DockBtn>
    <DockBtn $l={2}><svg width="9" height="9" viewBox="0 0 9 9"><path d="M1 1l7 7M8 1L1 8" stroke="#000" strokeWidth="1.500" /></svg></DockBtn>
  </DockHead>
);
const Branch = ({ h, kind, first, last, w = 20 }) => {
  const m = Math.floor(h / 2) + 0.5;
  return (
    <svg width={w} height={h} viewBox={`0 0 ${w} ${h}`} fill="none">
      <path d={`M10.500 ${first ? m : 0}V${last ? m : h}M10.500 ${m}H${w}`} stroke="#9a9a9a" strokeDasharray="1 1" />
      {kind && <><rect x="5.500" y={m - 4} width="8" height="8" rx="1" fill="#fff" stroke="#858585" /><path d={`M7 ${m}h5${kind === 'plus' ? `M9.500 ${m - 2.500}v5` : ''}`} stroke="#444" /></>}
    </svg>
  );
};
const Check = ({ on }) => <CheckBox>{on && <svg width="12" height="12" viewBox="0 0 12 12"><path d="M1.500 1l9 10M10.500 1l-9 10" stroke="#000" strokeWidth="3" /></svg>}</CheckBox>;
const Spin = ({ w, l, h = 22, p, children }) => (
  <Combo $w={w} $h={h} $l={l} $edit $p={p}>
    <ComboText>{children}</ComboText>
    <SpinCol><SpinHalf><Arrow d="up" /></SpinHalf><SpinHalf><Arrow d="down" /></SpinHalf></SpinCol>
  </Combo>
);
const Select = ({ w, h, l, edit, p, children }) => (
  <Combo $w={w} $h={h} $l={l} $edit={edit} $p={p}>{children}<ComboDrop><Arrow d="down" /></ComboDrop></Combo>
);
const Slider = ({ w }) => (
  <svg width={w} height="16" viewBox={`0 0 ${w} 16`} fill="none">
    <rect x="5" y="5.500" width={w - 6} height="3" rx="1.500" fill="#f6f6f6" stroke="#999" />
    <path d="M.5 2L2 .5h7L10.500 2v8l-5 5-5-5z" fill="#f4f4f4" stroke="#888" /><path d="M3 3.500h1M7 3.500h1" stroke="#aaa" />
  </svg>
);

/* ---------- data ---------- */
const menus = [['Pro', 'j', 'ect', 40], ['', 'E', 'dit', 21], ['', 'V', 'iew', 28], ['', 'L', 'ayer', 31], ['', 'S', 'ettings', 46], ['', 'P', 'lugins', 40], ['Vect', 'o', 'r', 36], ['', 'R', 'aster', 37], ['', 'D', 'atabase', 53], ['', 'W', 'eb', 25], ['Pro', 'c', 'essing', 61], ['', 'H', 'elp', 25]];

const db2 = <Ic s={20} vb="0 0 20 20"><rect width="20" height="19" y=".5" rx="3" fill="#6b96c8" /><Glyph x="1.500" y="12" fontSize="7.500" fill="#fff">DB2</Glyph></Ic>;
const small = node => <Ic s={20}>{node}</Ic>;
const earth = <><circle cx="6" cy="18.500" r="5" fill="#1c4d70" /><path d="M2 17l3-2 2 2-2 4zM8 18l2-1v3z" fill="#3fa34d" /></>;
const browserRows = [
  ['Project home', 16, 'f'], ['Home', 16, 'f'],
  ['Favourites', 20, <Ic s={20}><path d="M12 1.500l3 7 7.500.6-5.700 5 1.800 7.600L12 17.600l-6.600 4.100 1.800-7.600-5.700-5L9 8.500z" fill="#f0f0ea" stroke="#b9b9a4" strokeWidth="1.500" /></Ic>, 0.1],
  ['C:/', 16, 'f', 0.3], ['D:/', 16, 'f', 0.3], ['E:/', 16, 'f', 0.3], ['F:/', 16, 'f', 0.3], ['G:/', 16, 'f', 0.3],
  ['DB2', 20, db2, -0.1],
  ['MSSQL', 20, small(<path d="M1 1c7 3 14 0 19 4 2 2 3 4 3 6-7-1-15 2-22 11 3-7 4-13 0-21zM8 3c2 4 2 8 0 12M13 3c2 4 2 6 1 9M18 4c1 3 1 5 0 7" fill="#6b96c8" stroke="#3d5e80" strokeWidth="1.500" />), 0.2],
  ['Oracle', 20, small(<rect x="1.500" y="4" width="21" height="15" rx="6" fill="#6b96c8" stroke="#3d4f68" strokeWidth="3" />), 0.1],
  ['PostGIS', 20, small(<Elephant />), 0.1], ['SpatiaLite', 20, small(<Feather />)],
  ['ArcGisFeatureServer', 20, small(<><Globe /><VNet sc={.75} x={4} y={1} />{earth}</>), 0.08],
  ['ArcGisMapServer', 20, small(<><MapGlobe />{earth}</>), 0.08], ['OWS', 20, small(<Globe />), 0.2],
  ['Tile Server (XYZ)', 20, small(<MapGlobe />), 0.13], ['WCS', 20, small(<DarkGlobe />), 0.1],
  ['WFS', 20, small(<><Globe /><VNet sc={.75} x={3} y={2} /></>), 0.2],
];
const sideTools = [
  [<VNet />, 0, 1], [<Raster />, 0, 1], [<Feather />, 0, 1], [<Elephant />, 1, 1], [<MapGlobe />, 1, 1], [<DarkGlobe />, 0, 1],
  [<><Globe /><VNet sc={.75} x={3} y={2} /></>, 1, 1],
  [<path d="M6 2c6-3 10 1 9 6-1 6-4 8-8 9 3-3 4-5 3-8-5 1-7-4-4-7z" fill="#6b96c8" stroke="#3d5e80" />, 0, 1],
  [<><rect x="1" y="1" width="21" height="20" rx="2" fill="#b9cde2" stroke="#8aa4c0" /><VNet sc={.8} x={2} y={2} /></>, 0, 1],
  [<VNet />, 1, 0],
];
const legend = [['1', '#d7191c'], ['243', '#fdae61'], ['875', '#ffffbf'], ['3560', '#abdda4'], ['7797', '#2b83ba']];
const verts = [[582, 776], [582, 825], [762, 825], [762, 776], [852, 776], [852, 580], [897, 580], [897, 531], [942, 531], [942, 433], [987, 433], [987, 531], [1212, 531], [1212, 482], [1347, 482], [1347, 335]];
const hole = [[897, 384], [942, 384], [942, 433], [897, 433]];

const MapView = () => (
  <Canvas>
    <svg width="1081" height="859" viewBox="411 135 1081 859" fill="none">
      <path fillRule="evenodd" fill="#fee0e0" d={`M400 776L${verts.map(p => p.join(' ')).join('L')}L1500 335V100H400ZM${hole.map(p => p.join(' ')).join('L')}Z`} />
      <g stroke="#f9067c" strokeWidth="2"><path d={`M400 776L${verts.map(p => p.join(' ')).join('L')}L1500 335`} /><path d={`M${hole.map(p => p.join(' ')).join('L')}Z`} /></g>
      {[...verts, ...hole].map(([x, y], i) => (
        <g key={i} stroke="#fa0a0a"><rect x={x - 5} y={y - 5} width="10" height="10" fill="#ff0000" fillOpacity=".42" strokeWidth="1.800" /><path d={`M${x - 3} ${y - 3}l6 6M${x + 3} ${y - 3}l-6 6`} strokeWidth="1.300" /></g>
      ))}
    </svg>
  </Canvas>
);

const BrowserPanel = () => (
  <>
    <Head w={77}>Browser Panel</Head>
    <PanelTools>
      <Slot $w={27}><Ic s={18}><Box24 /><circle cx="18.500" cy="19" r="4" fill="#5a9460" /></Ic></Slot>
      <Slot $w={27}><Ic s={17}><Refresh /></Ic></Slot><Slot $w={27}><Ic s={17}><Funnel /></Ic></Slot>
      <Slot $w={27}><Ic s={18}><TreeArrow up /></Ic></Slot>
      <Slot $w={27}><Ic s={17}><circle cx="12" cy="12" r="10" fill="#5f8ec4" stroke="#426f9f" /><Glyph x="9" y="18" fontSize="17" fill="#fff" $f='"Liberation Serif", serif' $wt={700} fontStyle="italic">i</Glyph></Ic></Slot>
    </PanelTools>
    <Frame $h={350}>
      <Tree>
        {browserRows.map(([t, h, ic, ls]) => (
          <Row key={t} $h={h}>
            <Branch h={h} kind={ic === 'f' ? 'plus' : null} />
            {ic === 'f' ? <RowIcon $l={5} $r={7}><Folder /></RowIcon> : <RowIcon $l={3} $r={6}>{ic}</RowIcon>}
            <RowText $ls={ls}>{t}</RowText>
          </Row>
        ))}
      </Tree>
      <VScroll thumb={269} grip />
    </Frame>
  </>
);

const LayersPanel = () => (
  <>
    <Head h={21} w={68}>Layers Panel</Head>
    <PanelTools $l={3}>
      <Pressed $w={26} $h={25}><Ic s={18}><Sweep /></Ic></Pressed>
      <Slot $w={28}><Ic s={18}><path d="M2 8h10v13H2zM6 5h10v13H6zM10 2h9v12h-9z" fill="#f4f4f4" stroke="#777" /><path d="M12 12V4" stroke="#41617e" strokeWidth="2" /><Plus x={15} y={15} /></Ic></Slot>
      <Slot $w={27}><Ic s={20}><path d="M1 11c6-8 15-8 20 0-6 7-15 7-20 0z" fill="#fff" stroke="#aaa" /><circle cx="11" cy="10.500" r="4.500" fill="#5f8ec4" /><circle cx="11" cy="10.500" r="2" fill="#233" /><path d="M13 17h10l-5 5z" fill="#000" /></Ic></Slot>
      <Slot $w={27}><Ic s={17}><Funnel /></Ic></Slot>
      <Slot $w={27}><Ic s={18}><Eps s={20} x={0} y={13} /><path d="M10 14h12l-2 3v6h-3v-5h-2v5h-3v-6z" fill="#aaa" /></Ic></Slot>
      <CaretSlot $w={13}><Caret /></CaretSlot>
      <Slot $w={31}><Ic s={18}><TreeArrow /></Ic></Slot><Slot $w={24}><Ic s={18}><TreeArrow up /></Ic></Slot>
      <Slot $w={29}><Ic s={18}><Box24 /><rect x="13" y="15.500" width="10" height="6" rx="1.500" fill="#df3b44" /><path d="M15 18.500h6" stroke="#fff" strokeWidth="1.500" /></Ic></Slot>
    </PanelTools>
    <Frame $h={224}>
      <Tree>
        <Row $h={16} $sel><Branch h={16} /><RowIcon $l={3} $r={6}><Check on /></RowIcon>
          <Ic s={16} vb="0 0 16 16"><rect x=".5" y=".5" width="15" height="15" fill="#fff" stroke="#b43ce0" /><path d="M4 11l6-10 3 2-6 10-3 2z" fill="#a8c49c" stroke="#5d7a52" strokeWidth=".8" /></Ic>
          <RowIcon $l={6} $r={0} /><RowText $b $u $ls={0.17}>ganga-brahmaputra-basin</RowText></Row>
        <Row $h={18}><Branch h={18} /><RowIcon $l={3} $r={6}><Check on /></RowIcon>
          <Ic s={18} vb="0 0 18 18"><rect x=".5" y=".5" width="17" height="17" fill="#fff" stroke="#000" /></Ic>
          <RowIcon $l={6} $r={0} /><RowText $b $ls={-0.1}>Admin2</RowText></Row>
        <Row $h={20}><Branch h={20} kind="minus" last /><RowIcon $l={3} $r={6}><Check /></RowIcon>
          <Ic s={20}><g transform="scale(1.140)"><Raster /></g></Ic><RowIcon $l={6} $r={0} /><RowText $b $ls={0.05}>gt30e060n40</RowText></Row>
        {legend.map(([t, c], i) => (
          <Row key={t} $h={16} $l={20}><Branch h={16} last={i === 4} /><RowIcon $l={3} $r={6}><Swatch $c={c} /></RowIcon><RowText $ls={-0.1}>{t}</RowText></Row>
        ))}
      </Tree>
    </Frame>
  </>
);

const VertexEditor = () => (
  <>
    <Head h={21} w={72}>Vertex Editor</Head>
    <Frame $h={148}>
      <TableWrap>
        <TableTop>
          <Grid>
            <HeadCell $row /><HeadCell>x</HeadCell><HeadCell>y</HeadCell><HeadCell $l={14}>r</HeadCell>
            {[['0', '75.1000', '22.6083'], ['1', '75.1000', '22.6167'], ['2', '75.1083', '22.6167'], ['', '', '']].map(([n, x, y], i) => (
              <React.Fragment key={i}><HeadCell $row>{n}</HeadCell><Cell>{x}</Cell><Cell>{y}</Cell><Cell /></React.Fragment>
            ))}
          </Grid>
          <VScroll thumb={25} h={127} />
        </TableTop>
        <HScroll>
          <ScrollBtn><Arrow d="left" /></ScrollBtn>
          <Thumb $x={186}><ThumbDots $w={19} $h={11} /></Thumb>
          <Track />
          <ScrollBtn><Arrow d="left" /></ScrollBtn><ScrollBtn><Arrow d="right" /></ScrollBtn>
        </HScroll>
      </TableWrap>
    </Frame>
  </>
);

const triBtn = up => <Ic s={20}><path d={up ? 'M12 3l10 16H2z' : 'M12 20L2 3h20z'} fill="#c4c4c4" stroke="#909090" /></Ic>;
const StylingPanel = () => (
  <>
    <Head w={69}>Layer Styling</Head>
    <Select w={414} h={26}>
      <Ic w={22} h={18} vb="0 0 22 18"><path d="M3 2.500c2-1.500 4-1 6 .2 2 1 3 1 5 0 3-1.500 6-1.500 6 1.800 0 2-1 3-.5 5s-1 5-4 3.500c-2-1-3-3-5-3-2 0-3 2-5 3s-4 0-3.500-3c.3-2-.5-3-.5-4.500S2 3.500 3 2.500z" fill="#e4e4e4" stroke="#999" strokeWidth="1.200" /></Ic>
      <ComboText $l={2} $ls={0.02}>ganga-brahmaputra-basin</ComboText>
    </Select>
    <StyleBody>
      <StyleTabs>
        <TabActive><Ic s={29}><Brush /></Ic></TabActive>
        <TabStack>
          <Ic s={28}><Tag s={7.6} dy={3} /></Ic>
          <Ic w={32} h={38} vb="0 0 32 38"><path d="M6 9v16M26 9v16M16 12v17" stroke="#c9812a" strokeWidth="3" /><path d="M10 4h12v8H10z" fill="#ee6a6a" stroke="#b33" strokeWidth=".7" /><path d="M10 12h12l-3 4h-6z" fill="#d8923a" /><path d="M2 23l2-3h6l2 3z" fill="#d8923a" /><path d="M1.500 24h12v9h-12z" fill="#f9e04c" stroke="#c9a922" /><path d="M20 23l2-3h6l2 3z" fill="#d8923a" /><path d="M18.500 24h12v9h-12z" fill="#6b9ede" stroke="#3f70ac" /></Ic>
          <Ic w={27} h={27}><path d="M1 8c0-6 6-6 9-5V0l6 5-6 5V7c-2-1-4 0-3 3 1 2 3 2 3 3C4 14 1 12 1 8z" fill="#74ad83" stroke="#4d855c" strokeWidth=".6" /><path d="M23 18c0 6-6 6-7 5v-2c2 1 4 0 3-3-1-2-3-2-4-2v3l-5-5 5-5v3c4-1 8 1 8 6z" fill="#e07d3c" stroke="#b05a20" strokeWidth=".6" /></Ic>
        </TabStack>
      </StyleTabs>
      <StyleMain>
        <Select w={373} h={26} p={9}>
          <Ic w={14} h={16} vb="0 0 14 16"><g fill="#1cb25a" stroke="#08572a"><rect x="1.500" y=".8" width="9" height="3.500" rx="1" /><rect x="3.500" y="6" width="9" height="3.500" rx="1" /><rect x="1.500" y="11.300" width="9" height="3.500" rx="1" /></g></Ic>
          <ComboText $l={5} $ls={0}>Single symbol</ComboText>
        </Select>
        <ScrollArea>
          <ScrollContent>
            <SymbolTop>
              <Frame $h={99} $w={251}>
                <Tree>
                  <Row $h={16} $sel><Branch h={16} kind="minus" first last /><RowIcon $l={3} $r={6}><Swatch $bd="#a626e8" /></RowIcon><RowText $b $ls={-0.7}>Fill</RowText></Row>
                  <Row $h={16} $l={20}><Branch h={16} last /><RowIcon $l={3} $r={6}><Swatch $c="#fff" $bd="#e81ce8" /></RowIcon><RowText $ls={-0.02}>Simple fill</RowText></Row>
                </Tree>
              </Frame>
              <Preview />
            </SymbolTop>
            <BtnRow>
              <Btn $w={35} $h={31} $c="#b8b8b8"><Ic s={20}><path d="M8.500 2h7v6.500H22v7h-6.500V22h-7v-6.500H2v-7h6.500z" fill="#fff" stroke="#4d8a4a" strokeWidth="1.300" /><path d="M12 4.500v15M4.500 12h15" stroke="#4d8a4a" strokeWidth="2.500" /></Ic></Btn>
              <Btn $w={35} $h={31}><Ic s={20}><rect x="2" y="8" width="20" height="8" fill="#eee" stroke="#a8a8a8" /><path d="M5 12h14" stroke="#a8a8a8" strokeWidth="2.500" /></Ic></Btn>
              <Btn $w={35} $h={31}><Ic s={21}><path d="M8 7c0-7 10-7 10 0v5" stroke="#b0b0b0" strokeWidth="2.500" /><rect x="4" y="11" width="16" height="11" rx="1" fill="#d2d2d2" stroke="#aaa" /></Ic></Btn>
              <Btn $w={35} $h={31}><Ic s={20}><path d="M2.500 4v17.500h15" fill="#ccc" stroke="#a8a8a8" strokeWidth="2" /><path d="M5 2.500h15v16H5z" fill="#eee" stroke="#a8a8a8" /><circle cx="18.500" cy="18" r="4" fill="#ddd" stroke="#b4b4b4" /></Ic></Btn>
              <Btn $w={35} $h={31}>{triBtn(true)}</Btn><Btn $w={35} $h={31}>{triBtn(false)}</Btn>
            </BtnRow>
            <Rule $t={9} />
            <Field $h={22} $t={8}><FieldLabel $w={105} $ls={-0.1}>Unit</FieldLabel><Select w={252} h={22}><ComboText>Millimeter</ComboText></Select></Field>
            <Field $h={24} $t={2}><FieldLabel $w={105} $ls={0.02}>Transparency 0%</FieldLabel><Slider w={252} /></Field>
            <Field $h={22} $t={2}><FieldLabel $w={105}>Color</FieldLabel><Btn $w={236} $h={22}><ColorFill /></Btn><Box $l={1}><Btn $w={15} $h={22}><Arrow d="down" /></Btn></Box></Field>
            <Rule $t={74} />
            <Field $h={28} $t={5}><FieldLabel $w={102} $ls={-0.1}>Symbols in group</FieldLabel><Select w={159} h={22} edit><ComboText /></Select><Box $l={3}><Btn $w={93} $h={28} $c="#b0b0b0">Open Library</Btn></Box></Field>
            <SymbolList>
              <SymbolItems>
                <SymbolTile $c="#eff2c8" $b="#c9ca9c"><svg width="46" height="46" viewBox="0 0 46 46"><path d="M0 0l4 4M46 0l-4 4M3 42l2 3M43 42l-2 3" stroke="#444" strokeWidth="1.200" /></svg></SymbolTile>
                <SymbolTile $c="#a6bfde" $b="#7d95b3" /><SymbolTile $c="#eff2c8" $b="#c9ca9c" $dots /><SymbolTile $c="#b8dd6a" $b="#8fb348" /><SymbolTile $c="#eff2c8" $b="#c9ca9c" />
              </SymbolItems>
              <VScroll thumb={26} h={92} />
            </SymbolList>
          </ScrollContent>
          <VScroll thumb={290} grip />
        </ScrollArea>
        <GroupHead><Caret $s={6} $c="#333" /><GroupName>Layer rendering</GroupName><GroupLine /></GroupHead>
        <Field $h={22} $t={5}><FieldLabel $w={137} $ls={-0.06}>Layer transparency</FieldLabel><Slider w={176} /><Spin w={50} l={7} h={21}>0</Spin></Field>
        <Field $h={22} $t={7}><FieldLabel $w={137} $ls={-0.02}>Layer blending mode</FieldLabel><Select w={87} h={22}><ComboText $ls={0}>Normal</ComboText></Select></Field>
        <Field $h={22} $t={7}><FieldLabel $w={137} $ls={0.02}>Feature blending mode</FieldLabel><Select w={87} h={22}><ComboText $ls={0}>Normal</ComboText></Select></Field>
        <Field $h={29} $t={7}><Check /><Box $l={6}><FieldLabel $w={80} $ls={0}>Draw effects</FieldLabel></Box><Spacer /><Btn $w={30} $h={29}><Ic s={20}><path d="M12 1.500l3 7 7.500.6-5.700 5 1.800 7.600L12 17.600l-6.600 4.100 1.800-7.600-5.700-5L9 8.500z" fill="#ddd" stroke="#a5a5a5" /><path d="M13 23l3-3M20 22v-6l3-2" stroke="#555" strokeWidth="1.500" /></Ic></Btn><Box $l={3} /></Field>
        <Field $h={29} $t={6}><Check /><Box $l={6}><FieldLabel $w={180} $ls={0.06}>Control feature rendering order</FieldLabel></Box><Spacer /><Btn $w={30} $h={29}><Ic s={21}><Glyph x="1" y="11" fontSize="12" fill="#888" $wt={700}>A</Glyph><Glyph x="1" y="22" fontSize="12" fill="#888" $wt={700}>Z</Glyph><path d="M17 2v15M12.500 13l4.500 8 4.500-8z" fill="#999" stroke="#999" strokeWidth="2" /></Ic></Btn><Box $l={3} /></Field>
        <Field $h={29} $t={15}>
          <Btn $w={30} $h={29}><Ic s={19}><path d="M2 9l8-7v4c8-1 12 3 12 8 0 6-6 9-10 8 5-2 6-8-2-8v4z" fill="#e8833c" stroke="#c4601e" strokeWidth=".7" /></Ic></Btn><Box $l={6} />
          <Btn $w={30} $h={29}><Ic s={19}><path d="M22 9l-8-7v4C6 5 2 9 2 14c0 6 6 9 10 8-5-2-6-8 2-8v4z" fill="#8dbb90" stroke="#4d8a58" strokeWidth=".7" /></Ic></Btn>
          <Spacer /><Check on /><Box $l={6}><FieldLabel $w={77} as="div" $ls={-0.06}>Live update</FieldLabel></Box><Btn $w={93} $h={28} $c="#b0b0b0">Apply</Btn>
        </Field>
      </StyleMain>
    </StyleBody>
  </>
);

const ProcFrame = styled(Frame)`margin: 0 1px 0 -3px;`;
const ProcessingPanel = () => (
  <>
    <Head h={20} w={104}>Processing Toolbox</Head>
    <SearchField>Search...</SearchField>
    <ProcFrame $h={94}>
      <Tree>
        <Row $h={16}><Branch h={16} kind="minus" first w={22} /><RowText $ls={0.02}>Recently used algorithms</RowText></Row>
        <Row $h={20} $l={20}><Branch h={20} last /><RowIcon $l={3} $r={7}><Ic s={20}><circle cx="12" cy="12" r="9.500" stroke="#1d5fa8" strokeWidth="3.500" /><path d="M22 5l-9 6" stroke="#fff" strokeWidth="3" /><path d="M20 3.500L6 11c1 4 5 5 9 3M12 12h11" stroke="#1d5fa8" strokeWidth="2.800" /></Ic></RowIcon><RowText $ls={-0.1}>Catchment area</RowText></Row>
        <Row $h={20}><Branch h={20} kind="plus" w={22} /><RowIcon $l={0} $r={4}><Ic s={20}><circle cx="14" cy="13" r="8" fill="#3b9ac9" /><path d="M10 8l5-1 2 4-4 4-3-3zM18 14l3 0-1 4z" fill="#57b04f" /><path d="M3 4l7-3M5 1l6 7" stroke="#222" strokeWidth="2" /><Glyph x="0" y="23" fontSize="9" fill="#111" $wt={700}>GDAL</Glyph></Ic></RowIcon><RowText $ls={0.05}>GDAL/OGR [48 geoalgorithms]</RowText></Row>
        <Row $h={20}><Branch h={20} kind="plus" w={22} /><RowIcon $l={0} $r={3}><Ic s={20}><path d="M12 1l11 11-11 11L1 12z" fill="#f3f3f3" stroke="#ccc" /><path d="M12 21C11 15 8 9 5 6M12 21c0-6 3-12 7-15M12 21V6M12 21c-2-4-5-7-8-8M12 21c2-4 4-6 8-8" stroke="#3da33f" strokeWidth="1.500" /></Ic></RowIcon><RowText $ls={0.1}>GRASS GIS 7 commands [314 geoalgorithms]</RowText></Row>
        <Row $h={18}><Branch h={18} kind="plus" w={22} /><RowIcon $l={0} $r={3}><Ic s={19}><circle cx="6" cy="12" r="5" fill="#555" /><circle cx="15" cy="6" r="5" fill="#3566d0" /><circle cx="17" cy="17" r="5.500" fill="#d82a2a" /><path d="M8 10l5-3M8 13l6 3" stroke="#999" strokeWidth="2" /></Ic></RowIcon><RowText $ls={0.08}>Models [0 geoalgorithms]</RowText></Row>
      </Tree>
      <VScroll thumb={26} />
    </ProcFrame>
  </>
);

const Status = () => (
  <StatusBar>
    <StatusText $w={837} $ls={0.1}>Validation finished (0 error(s) found).</StatusText>
    <StatusText $w={65}>Coordinate</StatusText>
    <Combo $w={246} $h={22} $edit $p={71}><ComboText $ls={-0.12}>8700998,2670423</ComboText></Combo>
    <Box $l={4}><Ic s={21}><path d="M5 4c2-3 5-2 6 0l4 7-6 4-5-7z" fill="#fff" stroke="#000" strokeWidth="2" /><path d="M7 3l4 9M2 12l5 2M17 6l5-4" stroke="#000" strokeWidth="1.600" /><circle cx="14.500" cy="17" r="5" fill="#fff" stroke="#000" strokeWidth="2" /><circle cx="14.500" cy="16.500" r="1.500" fill="#000" /></Ic></Box>
    <StatusText $w={34} $l={14}>Scale</StatusText>
    <Select w={98} h={22} edit><ComboText $ls={0}>1:97,334</ComboText></Select>
    <Box $l={7}><Ic w={16} h={22} vb="0 0 16 22"><path d="M3.500 11V6c0-6 9-6 9 0v5" stroke="#aaa" strokeWidth="2.200" /><rect x=".5" y="10" width="15" height="11" rx="1" fill="#666" /></Ic></Box>
    <StatusText $w={56} $l={16}>Magnifier</StatusText><Spin w={81}>100%</Spin>
    <StatusText $w={56} $l={9} $ls={0}>Rotation</StatusText><Spin w={81}>0.0</Spin>
    <Box $l={6}><Check on /></Box><StatusText $w={59} $l={6} $ls={0}>Render</StatusText>
    <Ic s={20}><circle cx="12" cy="12" r="10.500" fill="#444" stroke="#222" /><path d="M12 1L1 12l11 11 11-11z" stroke="#ddd" /><ellipse cx="12" cy="12" rx="5" ry="10" stroke="#ddd" /><path d="M1 12h22M12 1v22" stroke="#111" strokeWidth="1.500" /><rect x="8" y="8" width="8" height="8" fill="#999" /></Ic>
    <StatusText $w={125} $l={4} $ls={0.24}>EPSG:3857 (OTF)</StatusText>
    <Ic s={21}><path d="M12 2c7 0 11 4 11 9 0 3-2 5-4 7l3 5-8-3C6 21 1 17 1 11 1 6 5 2 12 2z" fill="#666" /><path d="M5.500 9.500h3v3h-3zM10.500 9.500h3v3h-3zM15.500 9.500h3v3h-3z" fill="#fff" /></Ic>
  </StatusBar>
);

const Task = () => (
  <TaskBar>
    <Start><svg width="20" height="20" viewBox="0 0 20 20"><path d="M0 3l8.500-1.200V9.500H0zM9.500 1.700L20 0v9.500H9.500zM0 10.500h8.500v7.700L0 17zM9.500 10.500H20V20l-10.500-1.500z" fill="#fff" /></svg></Start>
    <Search>
      <Ic s={26}><circle cx="12" cy="12" r="10.500" stroke="#111" strokeWidth="2.800" /></Ic>
      <SearchText>Type here to search</SearchText>
      <Ic w={18} h={22} vb="0 0 18 22"><rect x="5.500" y="1" width="7" height="13" rx="1" stroke="#222" strokeWidth="1.500" /><path d="M2 10v4c0 3 14 3 14 0v-4M9 17v4M6 20.500h6" stroke="#222" strokeWidth="1.500" /></Ic>
    </Search>
    <AppIcon><Ic w={20} h={20} vb="0 0 22 22"><path d="M2 1v3h11V1M2 21v-3h11v3M2 6.500h11v9H2z" stroke="#fff" strokeWidth="1.300" /><path d="M19 1v5M19 12v9" stroke="#fff" strokeWidth="1.500" /><rect x="17.500" y="7" width="3" height="3.500" fill="#fff" /></Ic></AppIcon>
    <AppIcon><Ic s={30}><defs><linearGradient id="rg" x1="0" y1="0" x2="0" y2="1"><stop offset="0" stopColor="#dce9fa" /><stop offset=".35" stopColor="#2e66c8" /><stop offset="1" stopColor="#58b4f2" /></linearGradient></defs><circle cx="12" cy="12" r="11.300" fill="url(#rg)" /><Glyph x="7" y="17" fontSize="14.500" fill="#fff" $f='"Liberation Serif", serif'>R</Glyph></Ic></AppIcon>
    <AppIcon><Ic w={28} h={23} vb="0 0 28 23"><rect x=".5" y=".5" width="27" height="22" fill="#050505" stroke="#aaa" /><path d="M1 2h26" stroke="#ccc" strokeWidth="3" /><path d="M1 12C8 12 12 6 27 5V4H1z" fill="#444" /><Glyph x="3" y="9" fontSize="5" fill="#fff">C:\_</Glyph></Ic></AppIcon>
    <AppIcon><Ic w={23} h={23} vb="0 0 23 23"><path d="M0 0h23v12L12 23H0z" fill="#fff" /><path d="M12 22V12h10z" fill="#111" /></Ic></AppIcon>
    <AppIcon><Ic w={28} h={28} vb="0 0 28 28"><rect x="14" y="3" width="13.500" height="22" fill="#fff" stroke="#2b5796" /><path d="M17 7h8M17 10h8M17 13h8M17 16h8M17 19h8" stroke="#2b5796" strokeWidth="1.300" /><path d="M0 3l17-3v28L0 25z" fill="#2b5796" /><Glyph x="2.500" y="18.500" fontSize="12.500" fill="#fff" $wt={700}>W</Glyph></Ic></AppIcon>
    <AppIcon><Ic w={28} h={28} vb="0 0 28 28"><defs><linearGradient id="pc" x1="0" y1="0" x2="1" y2="1"><stop offset="0" stopColor="#1fd68b" /><stop offset=".5" stopColor="#1dc9a0" /><stop offset="1" stopColor="#f4ee3c" /></linearGradient></defs><rect width="28" height="28" fill="url(#pc)" /><path d="M19 0h9v20l-6-8z" fill="#12b9e0" /><path d="M14 4l8-4v4z" fill="#f4ee3c" /><rect x="4" y="4" width="20" height="20" fill="#0b0b0b" /><Glyph x="5.500" y="15" fontSize="11.500" fill="#fff" $wt={700}>PC</Glyph><path d="M6 20.500h8" stroke="#fff" strokeWidth="1.500" /></Ic></AppIcon>
    <AppIcon><Ic s={28}><defs><linearGradient id="ff" x1="1" y1="0" x2="0" y2="1"><stop offset="0" stopColor="#fff04a" /><stop offset=".5" stopColor="#ff8a1e" /><stop offset="1" stopColor="#e8134f" /></linearGradient></defs><circle cx="12" cy="12.500" r="9" fill="#2a6fe0" /><path d="M3 5l2 2c1-1 2-1 3-1l3-3c0 2 0 3 1 4l4 2c-1 2-4 2-5 4 1 3 5 4 8 1 2-2 1-7-2-10l2 1V1c5 4 5 9 4 13-1 6-6 10-11 10C5 24 0 19 1 12c0-3 1-5 2-7z" fill="url(#ff)" /></Ic></AppIcon>
    <TaskApp $w={190} $l={5} $p={13}>
      <Ic w={19} h={26} vb="0 0 19 28"><path d="M0 1h17v17l2 5-12 1H0z" fill="#f5cf6b" /><path d="M0 1l7 4v23l-7-3z" fill="#fbe49c" /></Ic><AppText $l={10} $ls={-0.48}>Screenshots</AppText>
    </TaskApp>
    <TaskApp $w={190} $l={11} $p={9}>
      <Ic s={28}><circle cx="12" cy="12" r="12" fill="#fbc63a" /><path d="M12 12L1.600 6A12 12 0 0 1 22.400 6H12z" fill="#de4a3d" /><path d="M1.600 6A12 12 0 0 0 11 24l6-9-5-3z" fill="#1ea05b" /><path d="M22.400 6A12 12 0 0 1 11 24l6-9V6z" fill="#fbc63a" /><circle cx="12" cy="12" r="5.700" fill="#fff" /><circle cx="12" cy="12" r="4.500" fill="#4285f4" /></Ic><AppText $l={5} $ls={-0.47}>Editing craigdsouza...</AppText>
    </TaskApp>
    <TaskApp $w={200} $l={6} $p={16} $on>{I.qgis(22)}<AppText $l={9} $ls={-0.62}>QGIS 2.18.20 - ken-r...</AppText></TaskApp>
    <Tray>
      <TrayIcon $w={106}><Ic w={19} h={19} vb="0 0 20 20"><circle cx="13" cy="4.500" r="3.500" stroke="#fff" strokeWidth="1.500" /><circle cx="6.500" cy="11" r="3" stroke="#fff" strokeWidth="1.500" /><path d="M1 19c1-6 10-6 11 0M11 10c4-2 7 0 8 5" stroke="#fff" strokeWidth="1.500" /></Ic></TrayIcon>
      <Box $l={-15} />
      <TrayIcon $w={16}><Ic w={16} h={10} vb="0 0 16 10"><path d="M1 9l7-7 7 7" stroke="#fff" strokeWidth="1.500" /></Ic></TrayIcon>
      <TrayIcon $w={44}><Ic w={20} h={14} vb="0 0 20 14"><path d="M4 13.500c-5 0-5-6-1-6C3 3 9-1 12 4c4-1 5 2 5 4 4 1 3 5.500 0 5.500z" fill="#fff" /></Ic></TrayIcon>
      <TrayIcon $w={17}><Ic w={20} h={14} vb="0 0 20 14"><path d="M5 4h13.500v8H4V8M1 1v2h4V1M3 4v5" stroke="#fff" strokeWidth="1.400" /><rect x="8" y="6" width="8" height="4.500" fill="#fff" /></Ic></TrayIcon>
      <TrayIcon $w={44}><Ic w={16} h={16} vb="0 0 17 17"><path d="M1 16C1 8 8 1 16 1M5 16c0-6 5-11 11-11M9 16c0-4 3-7 7-7" stroke="#ccc" strokeWidth="1.300" /><circle cx="14.500" cy="14.500" r="1.800" fill="#fff" /></Ic></TrayIcon>
      <TrayIcon $w={15}><Ic w={21} h={17} vb="0 0 21 18"><path d="M1 6h3l5-4v14l-5-4H1z" stroke="#fff" strokeWidth="1.300" /><path d="M12 6c1.500 2 1.500 4 0 6M15 4c2.500 3 2.500 7 0 10M18 2c4 4 4 10 0 14" stroke="#999" strokeWidth="1.200" /></Ic></TrayIcon>
      <Box $l={7} />
      <Clock>23:31<br />20-06-2018</Clock>
      <Box $l={17}><Ic w={32} h={32} vb="0 0 34 32"><path d="M1 1h20v16H10l-5 4v-4H1z" fill="#fff" /><path d="M5 5.500h12M5 9h12M5 12.500h9" stroke="#222" /><circle cx="20.500" cy="21" r="9.500" fill="#3a3a3a" stroke="#999" /><Glyph x="16.500" y="26" fontSize="13.500" fill="#fff" $wt={700}>4</Glyph></Ic></Box>
      <Spacer /><Peek />
    </Tray>
  </TaskBar>
);

const SideGripBottom = styled(SideGrip)`margin-top: 10px;`;
const StylingPanelWrap = styled.div`height: 717px; flex: none; display: flex; flex-direction: column; > :nth-child(2) { margin-top: 3px; }`;

export default function App() {
  return (
    <Window>
      <Global />
      <TitleBar>
        {I.qgis()}<TitleText>QGIS 2.18.20 - ken-river-watersheds</TitleText>
        <WinControls>
          <svg width="13" height="12" viewBox="0 0 13 12"><path d="M0.500 5.500h12" stroke="#000" /></svg>
          <svg width="13" height="13" viewBox="0 0 13 13" fill="none"><path d="M.5 3.500h9v9h-9zM3.500 3.500v-3h9v9h-3" stroke="#000" /></svg>
          <svg width="13" height="13" viewBox="0 0 13 13"><path d="M.5.5l12 12M12.500.5l-12 12" stroke="#000" /></svg>
        </WinControls>
      </TitleBar>
      <MenuBar>
        {menus.map(([a, u, b, w]) => <MenuItem key={a + u + b} $w={w}>{a}<u>{u}</u>{b}</MenuItem>)}
      </MenuBar>
      <ToolBar>
        <BarGrip $l={3} />
        {[I.newDoc, I.open, I.save, I.saveAs, I.composer, I.composerMgr].map((x, i) => <ToolIcon key={i}>{x}</ToolIcon>)}
        <BarGrip $l={7} $r={2} />
        {[I.touch, I.hand, I.pan, I.zin, I.zout, I.z11, I.zfull, I.zsel, I.zlay, I.zlast, I.znext, I.bookNew, I.book, I.refresh].map((x, i) => <ToolIcon key={i}>{x}</ToolIcon>)}
        <BarGrip $l={6} $r={1} />
        <ToolIcon>{I.identify}</ToolIcon><ToolIcon>{I.action}</ToolIcon><CaretSlot $w={15}><Caret $c="#999" /></CaretSlot>
        <ToolIcon>{I.select}</ToolIcon><CaretSlot $w={12}><Caret /></CaretSlot>
        <ToolIcon>{I.expr}</ToolIcon><CaretSlot $w={18}><Caret /></CaretSlot>
        <ToolIcon>{I.deselect}</ToolIcon><ToolIcon>{I.table}</ToolIcon><ToolIcon>{I.abacus}</ToolIcon><ToolIcon>{I.sigma}</ToolIcon>
        <ToolIcon>{I.measure}</ToolIcon><CaretSlot $w={15}><Caret /></CaretSlot>
        <ToolIcon>{I.tip}</ToolIcon><ToolIcon>{I.textA}</ToolIcon><CaretSlot $w={13}><Caret /></CaretSlot>
        <BarGrip $l={9} $r={1} /><ToolIcon>{I.help}</ToolIcon>
      </ToolBar>
      <ToolBar>
        <BarGrip $l={3} />
        <ToolIcon>{I.pencils}</ToolIcon><ToolIcon><Pressed>{I.pencil}</Pressed></ToolIcon>
        <ToolIcon>{I.saveGray}</ToolIcon><ToolIcon>{I.addFeat}</ToolIcon><ToolIcon w={36}>{I.curve}</ToolIcon><CaretSlot $w={12}><Caret /></CaretSlot>
        <ToolIcon w={36}>{I.moveFeat}</ToolIcon><ToolIcon w={36}><Pressed>{I.node}</Pressed></ToolIcon>
        {[I.trash, I.cut, I.copy, I.paste].map((x, i) => <ToolIcon key={i}>{x}</ToolIcon>)}
        <BarGrip $l={8} />
        {[I.abc, I.pie, I.labHl, I.labPin, I.labEye, I.labMove, I.labRot, I.labEdit].map((x, i) => <ToolIcon key={i}>{x}</ToolIcon>)}
        <BarGrip $l={8} /><ToolIcon>{I.csw}</ToolIcon><BarGrip $l={8} $r={1} /><ToolIcon>{I.python}</ToolIcon>
      </ToolBar>
      <Main>
        <SideBar>
          <SideGrip />
          <SideList>
            {sideTools.map(([ic, caret, plus], i) => (
              <SideItem key={i}><Ic s={26}>{ic}{plus ? <Plus x={15} y={14.500} /> : <Star x={14} y={14} />}</Ic>{caret ? <Caret $s={4.500} /> : null}</SideItem>
            ))}
          </SideList>
          <SideGripBottom />
        </SideBar>
        <LeftDock>
          <BrowserPanel />
          <HSplit $h={8}><HDots $w={113} /></HSplit>
          <LayersPanel />
          <HSplit $h={7}><HDots $w={113} /></HSplit>
          <VertexEditor />
        </LeftDock>
        <VSplit $w={6}><VDots /></VSplit>
        <MapView />
        <VSplit $w={9}><VDots /></VSplit>
        <RightDock>
          <StylingPanelWrap><StylingPanel /></StylingPanelWrap>
          <HSplit $h={10}><HDots $w={138} /></HSplit>
          <ProcessingPanel />
        </RightDock>
      </Main>
      <Status />
      <Task />
    </Window>
  );
}
